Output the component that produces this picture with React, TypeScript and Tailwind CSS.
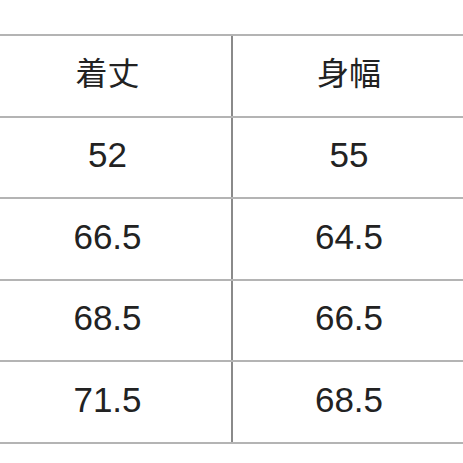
const rows = [
  ["着丈", "身幅"],
  ["52", "55"],
  ["66.5", "64.5"],
  ["68.5", "66.5"],
  ["71.5", "68.5"],
];

export default function App() {
  return (
    <main
      className="w-[463px] h-[463px] overflow-hidden bg-white text-[#222]"
      style={{ fontFamily: '"Liberation Sans", "Noto Sans CJK JP", sans-serif' }}
    >
      <div className="mt-[34px] ml-[-16px] w-[481px] border-t-2 border-[#b4b4b4]">
        {rows.map((row, i) => (
          <div
            key={i}
            className="grid grid-cols-[247px_2px_1fr] h-[81.5px] border-b-2 border-[#b4b4b4]"
          >
            <div className={`flex items-center justify-center pb-[4px] ${i === 0 ? "text-[32px]" : "text-[35px]"}`}>
              {row[0]}
            </div>
            <div className="bg-[#8a8a8a]" />
            <div className={`flex items-center justify-center pb-[4px] ${i === 0 ? "text-[32px]" : "text-[35px]"}`}>
              {row[1]}
            </div>
          </div>
        ))}
      </div>
    </main>
  );
}
